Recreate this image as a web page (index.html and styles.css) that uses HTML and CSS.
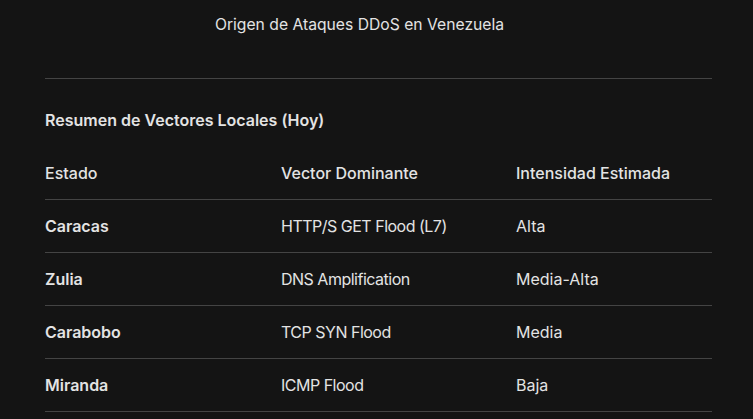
FILE: index.html
```html
<!DOCTYPE html>
<html lang="es">
<head>
    <meta charset="UTF-8">
    <title>Origen de Ataques DDoS en Venezuela</title>
    <link rel="stylesheet" href="styles.css">
</head>
<body>
    <div class="page">
        <h1 class="title">Origen de Ataques DDoS en Venezuela</h1>
        <hr class="rule">
        <h2 class="subtitle">Resumen de Vectores Locales (Hoy)</h2>
        <table class="vectors">
            <thead>
                <tr>
                    <th>Estado</th>
                    <th>Vector Dominante</th>
                    <th>Intensidad Estimada</th>
                </tr>
            </thead>
            <tbody>
                <tr>
                    <td class="state">Caracas</td>
                    <td class="vector">HTTP/S GET Flood (L7)</td>
                    <td>Alta</td>
                </tr>
                <tr>
                    <td class="state">Zulia</td>
                    <td class="vector">DNS Amplification</td>
                    <td>Media-Alta</td>
                </tr>
                <tr>
                    <td class="state">Carabobo</td>
                    <td class="vector">TCP SYN Flood</td>
                    <td>Media</td>
                </tr>
                <tr>
                    <td class="state">Miranda</td>
                    <td class="vector">ICMP Flood</td>
                    <td>Baja</td>
                </tr>
            </tbody>
        </table>
    </div>
</body>
</html>
```

FILE: styles.css
```css
html,
body {
    margin: 0;
    padding: 0;
    background: #141414;
}

body {
    font: 16px/1.5 Inter, Roboto, "Noto Sans", sans-serif;
    color: #e3e3e3;
}

.page {
    width: 667px;
    padding: 0 41px 0 45px;
}

.title {
    margin: 0;
    padding: 13px 38px 0 0;
    height: 78px;
    box-sizing: border-box;
    font-size: 15.7px;
    font-weight: 400;
    text-align: center;
}

.rule {
    margin: 0;
    border: 0;
    border-top: 1px solid #444;
}

.subtitle {
    margin: 0;
    padding: 29px 0 0;
    font-size: 16px;
    font-weight: 600;
    line-height: 24px;
}

.vectors {
    width: 100%;
    border-collapse: collapse;
    margin-top: 15px;
}

.vectors th,
.vectors td {
    padding: 0;
    height: 52px;
    text-align: left;
    vertical-align: middle;
    border-bottom: 1px solid #444;
}

.vectors th {
    font-weight: 500;
}

.vectors th:nth-child(1) {
    width: 236px;
}

.vectors th:nth-child(2) {
    width: 235px;
}

.vectors .state {
    font-weight: 600;
}

.vectors .vector {
    letter-spacing: -0.5px;
}
```
